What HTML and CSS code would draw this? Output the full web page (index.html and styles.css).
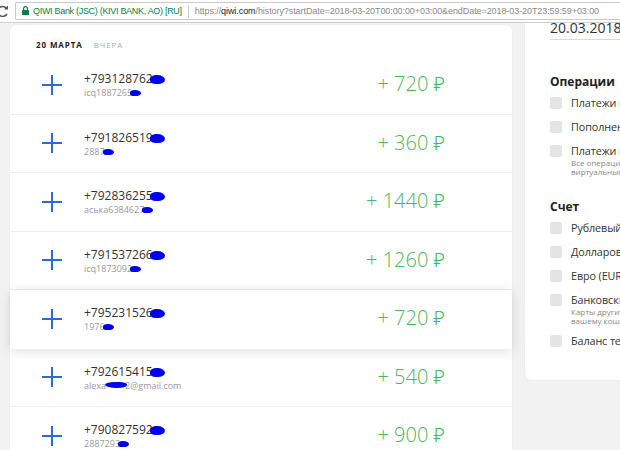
FILE: index.html
```html
<!DOCTYPE html>
<html lang="ru">
<head>
<meta charset="utf-8">
<title>QIWI история</title>
<link rel="stylesheet" href="styles.css">
</head>
<body>
<div class="toolbar">
  <svg class="reload" width="8" height="12" viewBox="4 0 8 12"><path d="M10.5 3.2A5 5 0 1 0 11 9" fill="none" stroke="#555" stroke-width="1.5"/><path d="M12 0.5V4.5H8Z" fill="#555"/></svg>
  <div class="omnibox">
    <svg class="lock" width="7" height="9" viewBox="0 0 7 9"><path d="M1.6 4V2.6a1.9 1.9 0 0 1 3.8 0V4" fill="none" stroke="#0b8043" stroke-width="1.2"/><rect x="0" y="4" width="7" height="5" rx="0.6" fill="#0b8043"/></svg>
    <span class="ev">QIWI Bank (JSC) (KIVI BANK, AO) [RU]</span>
    <span class="sep"></span>
    <span class="url"><span class="dim">https://</span>qiwi.com<span class="dim">/history?startDate=2018-03-20T00:00:00+03:00&amp;endDate=2018-03-20T23:59:59+03:00</span></span>
  </div>
</div>
<div class="page">
  <main class="history">
    <div class="day"><b>20 МАРТА</b><span>ВЧЕРА</span></div>

    <div class="row">
      <svg class="plus" width="20" height="20" viewBox="0 0 20 20"><path d="M10 0V20M0 10H20"/></svg>
      <div class="info"><div class="phone">+793128762<i class="blot"></i></div><div class="sub">icq1887265<i class="blot sm"></i></div></div>
      <div class="amount">+ 720 ₽</div>
    </div>
    <div class="row">
      <svg class="plus" width="20" height="20" viewBox="0 0 20 20"><path d="M10 0V20M0 10H20"/></svg>
      <div class="info"><div class="phone">+791826519<i class="blot"></i></div><div class="sub">2887<i class="blot sm"></i></div></div>
      <div class="amount">+ 360 ₽</div>
    </div>
    <div class="row">
      <svg class="plus" width="20" height="20" viewBox="0 0 20 20"><path d="M10 0V20M0 10H20"/></svg>
      <div class="info"><div class="phone">+792836255<i class="blot"></i></div><div class="sub">аська6384627<i class="blot sm"></i></div></div>
      <div class="amount">+ 1440 ₽</div>
    </div>
    <div class="row">
      <svg class="plus" width="20" height="20" viewBox="0 0 20 20"><path d="M10 0V20M0 10H20"/></svg>
      <div class="info"><div class="phone">+791537266<i class="blot"></i></div><div class="sub">icq1873092<i class="blot sm"></i></div></div>
      <div class="amount">+ 1260 ₽</div>
    </div>
    <div class="row active">
      <svg class="plus" width="20" height="20" viewBox="0 0 20 20"><path d="M10 0V20M0 10H20"/></svg>
      <div class="info"><div class="phone">+795231526<i class="blot"></i></div><div class="sub">1976<i class="blot sm"></i></div></div>
      <div class="amount">+ 720 ₽</div>
    </div>
    <div class="row">
      <svg class="plus" width="20" height="20" viewBox="0 0 20 20"><path d="M10 0V20M0 10H20"/></svg>
      <div class="info"><div class="phone">+792615415<i class="blot"></i></div><div class="sub">alexa<i class="blot wide"></i>2@gmail.com</div></div>
      <div class="amount">+ 540 ₽</div>
    </div>
    <div class="row">
      <svg class="plus" width="20" height="20" viewBox="0 0 20 20"><path d="M10 0V20M0 10H20"/></svg>
      <div class="info"><div class="phone">+790827592<i class="blot"></i></div><div class="sub">2887293<i class="blot sm"></i></div></div>
      <div class="amount">+ 900 ₽</div>
    </div>
  </main>

  <aside class="filters">
    <div class="date">20.03.2018</div>

    <h3 class="group-title">Операции</h3>
    <div class="check"><span class="box"></span><div><div class="label">Платежи и переводы</div></div></div>
    <div class="check"><span class="box"></span><div><div class="label">Пополнения</div></div></div>
    <div class="check"><span class="box"></span><div><div class="label">Платежи по картам QIWI</div><div class="note">Все операции по картам QIWI и<br>виртуальным картам</div></div></div>

    <h3 class="group-title second">Счет</h3>
    <div class="check"><span class="box"></span><div><div class="label">Рублевый счет</div></div></div>
    <div class="check"><span class="box"></span><div><div class="label">Долларовый счет</div></div></div>
    <div class="check"><span class="box"></span><div><div class="label">Евро (EUR)</div></div></div>
    <div class="check"><span class="box"></span><div><div class="label">Банковские карты</div><div class="note">Карты других банков, привязанные к<br>вашему кошельку</div></div></div>
    <div class="check"><span class="box"></span><div><div class="label">Баланс телефона</div></div></div>
  </aside>
</div>
</body>
</html>
```
FILE: styles.css
```css
html, body {
  margin: 0;
  padding: 0;
}
body {
  width: 620px;
  height: 450px;
  overflow: hidden;
  background: #f2f2f2;
  font-family: "Open Sans", "Noto Sans", "DejaVu Sans", sans-serif;
  color: #333;
}

/* browser bar */
.toolbar {
  height: 22px;
  background: #fff;
  border-bottom: 1px solid #cfcfcf;
  display: flex;
  align-items: center;
}
.reload {
  flex: none;
}
.omnibox {
  flex: 1;
  margin-left: 7px;
  height: 16px;
  border: 1px solid #c9c9c9;
  border-right: none;
  border-radius: 2px 0 0 2px;
  display: flex;
  align-items: center;
  padding-left: 6px;
  font-family: "Liberation Sans", Arial, sans-serif;
  font-size: 9px;
  white-space: nowrap;
  overflow: hidden;
}
.lock {
  flex: none;
  margin-right: 4px;
  margin-top: -1px;
}
.ev {
  color: #0b8043;
  letter-spacing: -0.3px;
}
.sep {
  width: 1px;
  height: 13px;
  background: #cccccc;
  margin: 0 6px;
}
.url {
  color: #222;
  letter-spacing: -0.08px;
}
.url .dim {
  color: #8a8a8a;
}

/* page */
.page {
  display: flex;
  gap: 13px;
  padding-left: 10px;
  height: 427px;
  overflow: hidden;
}

.history {
  flex: none;
  width: 502px;
  margin-top: 2px;
  background: #fff;
  border-radius: 6px 6px 0 0;
  box-shadow: 0 0 2px rgba(0, 0, 0, 0.06);
}
.day {
  height: 31px;
  padding-left: 26px;
  font-size: 8px;
  letter-spacing: 0.9px;
  line-height: 10px;
  padding-top: 15px;
  box-sizing: border-box;
}
.day b {
  color: #222;
  font-weight: 700;
}
.day span {
  color: #aaa;
  margin-left: 11px;
}

.row {
  height: 58.5px;
  box-sizing: border-box;
  border-bottom: 1px solid #eeeeee;
  display: flex;
  align-items: center;
  padding-left: 32px;
  background: #fff;
}
.row.active {
  border-bottom-color: transparent;
  box-shadow: 0 2px 12px rgba(0, 0, 0, 0.13);
  position: relative;
  z-index: 1;
}
.plus {
  flex: none;
  stroke: #2a6ccf;
  stroke-width: 2;
  fill: none;
}
.info {
  margin-left: 22px;
  margin-top: 1px;
}
.phone {
  font-size: 12px;
  line-height: 14px;
  color: #333;
  white-space: nowrap;
}
.sub {
  font-size: 9px;
  line-height: 11px;
  margin-top: 1px;
  color: #999;
  white-space: nowrap;
}
.blot {
  display: inline-block;
  width: 15px;
  height: 9px;
  margin-left: -3px;
  vertical-align: -1px;
  background: #0000f0;
  border-radius: 45% 55% 50% 40%;
}
.blot.sm {
  width: 11px;
  height: 6px;
  margin-left: -2px;
  vertical-align: 0;
}
.blot.wide {
  width: 22px;
  height: 6px;
  margin-left: -1px;
  margin-right: -2px;
  vertical-align: 1px;
  border-radius: 50% 40% 50% 60%;
}
.amount {
  margin-left: auto;
  margin-right: 67px;
  font-size: 20px;
  font-weight: 300;
  color: #45b85a;
  white-space: nowrap;
  margin-top: -2px;
}

/* filters */
.filters {
  flex: none;
  align-self: flex-start;
  width: 230px;
  background: #fff;
  border-radius: 0 0 6px 6px;
  box-shadow: 0 0 2px rgba(0, 0, 0, 0.08);
  padding: 0 0 23px 25px;
  overflow: hidden;
  white-space: nowrap;
}
.date {
  margin-top: -4px;
  font-size: 14px;
  line-height: 18px;
  padding-bottom: 2px;
  border-bottom: 1px solid #d9d9d9;
  color: #333;
}
.group-title {
  margin: 34px 0 5px;
  font-size: 12px;
  line-height: 16px;
  font-weight: 700;
  color: #222;
}
.group-title.second {
  margin-top: 23px;
}
.check {
  display: flex;
  gap: 9px;
  margin-bottom: 8px;
}
.box {
  flex: none;
  width: 12px;
  height: 12px;
  margin-top: 2px;
  border-radius: 2px;
  background: #e4e4e4;
}
.label {
  font-size: 10.8px;
  line-height: 16px;
  letter-spacing: -0.1px;
  color: #333;
}
.note {
  font-size: 8px;
  line-height: 9px;
  color: #888;
  margin-top: -1px;
}
```
